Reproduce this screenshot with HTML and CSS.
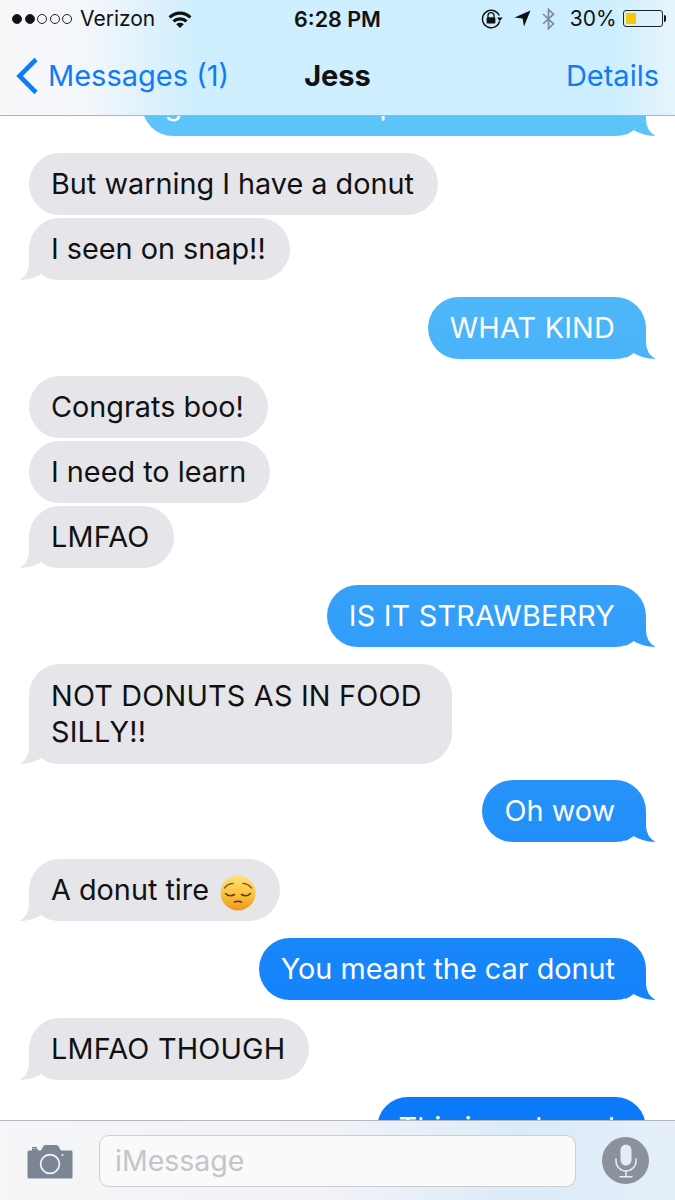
FILE: index.html
```html
<!DOCTYPE html>
<html lang="en">
<head>
    <meta charset="UTF-8">
    <meta name="viewport" content="width=device-width, initial-scale=1.0">
    <title>Jess</title>
    <link rel="stylesheet" href="styles.css">
</head>
<body>
<div class="phone">

    <!-- Status bar and navigation -->
    <header class="top">
        <div class="status">
            <div class="status-left">
                <span class="signal">
                    <i class="dot on"></i><i class="dot on"></i><i class="dot"></i><i class="dot"></i><i class="dot"></i>
                </span>
                <span class="carrier">Verizon</span>
                <svg class="wifi" width="24" height="18" viewBox="0 0 24 18">
                    <path d="M0.5 6.2 A16.5 16.5 0 0 1 23.5 6.2 L21.3 8.5 A13.3 13.3 0 0 0 2.7 8.5 Z"/>
                    <path d="M4.4 10.2 A11 11 0 0 1 19.6 10.2 L17.4 12.5 A8 8 0 0 0 6.6 12.5 Z"/>
                    <path d="M8.2 14.2 A5.6 5.6 0 0 1 15.8 14.2 L12 18 Z"/>
                </svg>
            </div>
            <div class="time">6:28 PM</div>
            <div class="status-right">
                <svg class="lock" width="22" height="20" viewBox="0 0 22 20">
                    <path d="M18.6 12.2 A8.7 8.7 0 1 1 18.2 6.6" fill="none" stroke="#111" stroke-width="1.4"/>
                    <path d="M16 8.6 L21.6 8.6 L18.8 12.2 Z" fill="#111"/>
                    <path d="M7 8.2 V6.6 A3 3 0 0 1 13 6.6 V8.2" fill="none" stroke="#111" stroke-width="1.3"/>
                    <rect x="5.6" y="8.2" width="8.8" height="6.3" rx="0.8" fill="#111"/>
                </svg>
                <svg class="arrow" width="17" height="17" viewBox="0 0 17 17">
                    <path d="M16.5 0.5 L0.5 7.5 L8.6 8.6 L10 16.5 Z" fill="#111"/>
                </svg>
                <svg class="bluetooth" width="15" height="22" viewBox="0 0 15 22">
                    <path d="M2 6 L12.5 15.8 L7.5 20.6 V1.4 L12.5 6.2 L2 16" fill="none" stroke="#7d8c98" stroke-width="1.7"/>
                </svg>
                <span class="percent">30%</span>
                <span class="battery"><span class="battery-fill"></span></span>
                <span class="battery-cap"></span>
            </div>
        </div>
        <nav class="nav">
            <a class="back">
                <svg width="24" height="38" viewBox="0 0 24 38">
                    <path d="M21 2.5 L4.5 19 L21 35.5" fill="none" stroke="#0f7cf6" stroke-width="4.6"/>
                </svg>
                Messages (1)
            </a>
            <div class="title">Jess</div>
            <a class="details">Details</a>
        </nav>
    </header>

    <!-- Conversation -->
    <main class="thread">
        <div class="msg sent tail first">got to the store please listen now</div>

        <div class="msg recv">But warning I have a donut</div>
        <div class="msg recv tail">I seen on snap!!</div>

        <div class="msg sent tail caps">WHAT KIND</div>

        <div class="msg recv">Congrats boo!</div>
        <div class="msg recv">I need to learn</div>
        <div class="msg recv tail caps">LMFAO</div>

        <div class="msg sent tail caps">IS IT STRAWBERRY</div>

        <div class="msg recv tail multi caps">NOT DONUTS AS IN FOOD<br>SILLY!!</div>

        <div class="msg sent tail">Oh wow</div>

        <div class="msg recv tail">A donut tire
            <svg class="emoji" width="36" height="36" viewBox="0 0 36 36">
                <defs>
                    <linearGradient id="face" x1="0" y1="0" x2="0" y2="1">
                        <stop offset="0" stop-color="#fde27a"/>
                        <stop offset="0.55" stop-color="#fbc23c"/>
                        <stop offset="1" stop-color="#ee9420"/>
                    </linearGradient>
                </defs>
                <circle cx="18" cy="18" r="17.5" fill="url(#face)"/>
                <path d="M4.5 13 Q8 8.5 13 8.5 M31.5 13 Q28 8.5 23 8.5" fill="none" stroke="#8a5a1c" stroke-width="1.4" stroke-linecap="round"/>
                <path d="M5.5 18.5 Q9.5 22.5 14.5 19.5 M30.5 18.5 Q26.5 22.5 21.5 19.5" fill="none" stroke="#5b3a12" stroke-width="1.6" stroke-linecap="round"/>
                <path d="M14.5 27 Q18 25.6 21.5 27" fill="none" stroke="#5b3a12" stroke-width="1.6" stroke-linecap="round"/>
            </svg>
        </div>

        <div class="msg sent tail wide-gap">You meant the car donut</div>

        <div class="msg recv tail caps">LMFAO THOUGH</div>

        <div class="msg sent tail">This is so bored</div>
    </main>

    <!-- Compose bar -->
    <footer class="compose">
        <svg class="camera" width="46" height="35" viewBox="0 0 46 35">
            <path d="M3 6.5 H5 V5 H11 V6.5 H14 L16.5 2 Q17 1 18.5 1 H29 Q30.5 1 31.2 2 L34 6.5 H44 Q45.5 6.5 45.5 8 V33 Q45.5 34.5 44 34.5 H2 Q0.5 34.5 0.5 33 V8 Q0.5 6.5 2 6.5 Z" fill="#7b8594"/>
            <circle cx="23" cy="20" r="9.4" fill="none" stroke="#f4f5f8" stroke-width="1.7"/>
            <circle cx="35.5" cy="11" r="1" fill="#f4f5f8"/>
            <rect x="5" y="3" width="5" height="1.6" fill="#7b8594"/>
        </svg>
        <div class="input">iMessage</div>
        <div class="mic">
            <svg width="22" height="34" viewBox="0 0 22 34">
                <rect x="5.5" y="0.5" width="11" height="21" rx="5.5" fill="#e2edf8"/>
                <path d="M1 14.5 V17 A10 10 0 0 0 21 17 V14.5 M11 27 V32.5 M4.5 32.8 H17.5" fill="none" stroke="#e8f0f8" stroke-width="1.5"/>
            </svg>
        </div>
    </footer>

</div>
</body>
</html>
```

FILE: styles.css
```css
* {
    box-sizing: border-box;
}

body {
    margin: 0;
    background: #fff;
    font-family: "Inter", "Liberation Sans", sans-serif;
    color: #111;
}

.phone {
    display: flex;
    flex-direction: column;
    width: 675px;
    height: 1200px;
    overflow: hidden;
}

/* header */
.top {
    position: relative;
    z-index: 2;
    height: 116px;
    flex: none;
    background: linear-gradient(90deg, #f8f8fa 0, #f3f6fa 90px, #cfeefe 195px, #cdeefe 610px, #e6f4fc 675px);
    border-bottom: 1px solid #a9b4bb;
}

.status {
    display: grid;
    grid-template-columns: 1fr auto 1fr;
    align-items: center;
    height: 37px;
    font-size: 21px;
}

.status-left {
    display: flex;
    align-items: center;
    padding-left: 12px;
}

.signal {
    display: flex;
    gap: 2.5px;
    margin-right: 8px;
}

.dot {
    width: 10px;
    height: 10px;
    border-radius: 50%;
    border: 1px solid #222;
}

.dot.on {
    background: #111;
}

.wifi {
    margin-left: 13px;
    fill: #111;
}

.time {
    font-size: 21.5px;
    font-weight: 600;
}

.status-right {
    display: flex;
    align-items: center;
    justify-content: flex-end;
    padding-right: 9px;
}

.lock {
    margin-right: 11px;
}

.arrow {
    margin-right: 10px;
}

.bluetooth {
    margin-right: 14px;
}

.percent {
    margin-right: 6px;
}

.battery {
    display: block;
    width: 40px;
    height: 17px;
    padding: 2px;
    border: 1px solid #222;
    border-radius: 3px;
}

.battery-fill {
    display: block;
    width: 10px;
    height: 100%;
    background: #fdc400;
}

.battery-cap {
    width: 2.5px;
    height: 7px;
    margin-left: 1px;
    background: #111;
    border-radius: 0 2px 2px 0;
}

.nav {
    display: grid;
    grid-template-columns: 1fr auto 1fr;
    align-items: center;
    height: 77px;
    font-size: 29px;
}

.back {
    display: flex;
    align-items: center;
    gap: 9px;
    padding-left: 15px;
    color: #0f7cf6;
}

.title {
    font-weight: 700;
}

.details {
    justify-self: end;
    padding-right: 16px;
    color: #0f7cf6;
}

/* conversation */
.thread {
    flex: 1;
    min-height: 0;
    display: flex;
    flex-direction: column;
    align-items: flex-start;
    gap: 3px;
    padding: 0 29px;
}

.msg {
    position: relative;
    flex: none;
    padding: 13px 24px 13px 22px;
    border-radius: 31px;
    font-size: 28.8px;
    line-height: 36px;
    white-space: nowrap;
}

.msg.caps {
    letter-spacing: 0.2px;
}

.msg.first {
    margin-top: -42px;
}

.msg.tail {
    margin-bottom: 14px;
}

.msg.wide-gap {
    margin-bottom: 15px;
}

.msg.multi {
    padding: 14px 30px 14px 22px;
    margin-bottom: 13px;
}

.recv {
    background: #e5e5ea;
}

.sent {
    align-self: flex-end;
    padding-right: 31px;
    color: #fff;
    background: linear-gradient(180deg, #5fc6f9 100px, #0a79fa 1120px) fixed;
}

/* bubble tails, only on the last message of a run */
.msg.tail::after {
    content: "";
    position: absolute;
    bottom: 0;
    width: 31px;
    height: 30px;
}

.sent.tail::after {
    right: -10px;
    background: linear-gradient(180deg, #5fc6f9 100px, #0a79fa 1120px) fixed;
    clip-path: path("M21 0 L21 14 Q21.5 25 30.5 30 Q17 29.5 8.5 24 Q5 27 0 29 L0 0 Z");
}

.recv.tail::after {
    left: -10px;
    background: #e5e5ea;
    clip-path: path("M10 0 L10 14 Q9.5 25 0.5 30 Q14 29.5 22.5 24 Q26 27 31 29 L31 0 Z");
}

.emoji {
    margin: -8px 0 -8px 3px;
    vertical-align: -3px;
}

/* compose bar */
.compose {
    position: relative;
    z-index: 2;
    flex: none;
    display: flex;
    align-items: center;
    height: 80px;
    padding: 0 26px 0 27px;
    background: linear-gradient(90deg, #f6f6f8 0, #f0f2f7 340px, #dcebf8 520px, #e4eff9 675px);
    border-top: 1px solid #b4b8bd;
}

.camera {
    flex: none;
    margin-top: 2px;
}

.input {
    flex: none;
    width: 477px;
    height: 52px;
    margin-left: 26px;
    padding-left: 15px;
    background: #fafafb;
    border: 1px solid #ccced2;
    border-radius: 10px;
    color: #c4c5ca;
    font-size: 28.5px;
    line-height: 50px;
}

.mic {
    flex: none;
    display: flex;
    align-items: center;
    justify-content: center;
    width: 47px;
    height: 47px;
    margin-left: 26px;
    border-radius: 50%;
    background: #8c929b;
}
```
